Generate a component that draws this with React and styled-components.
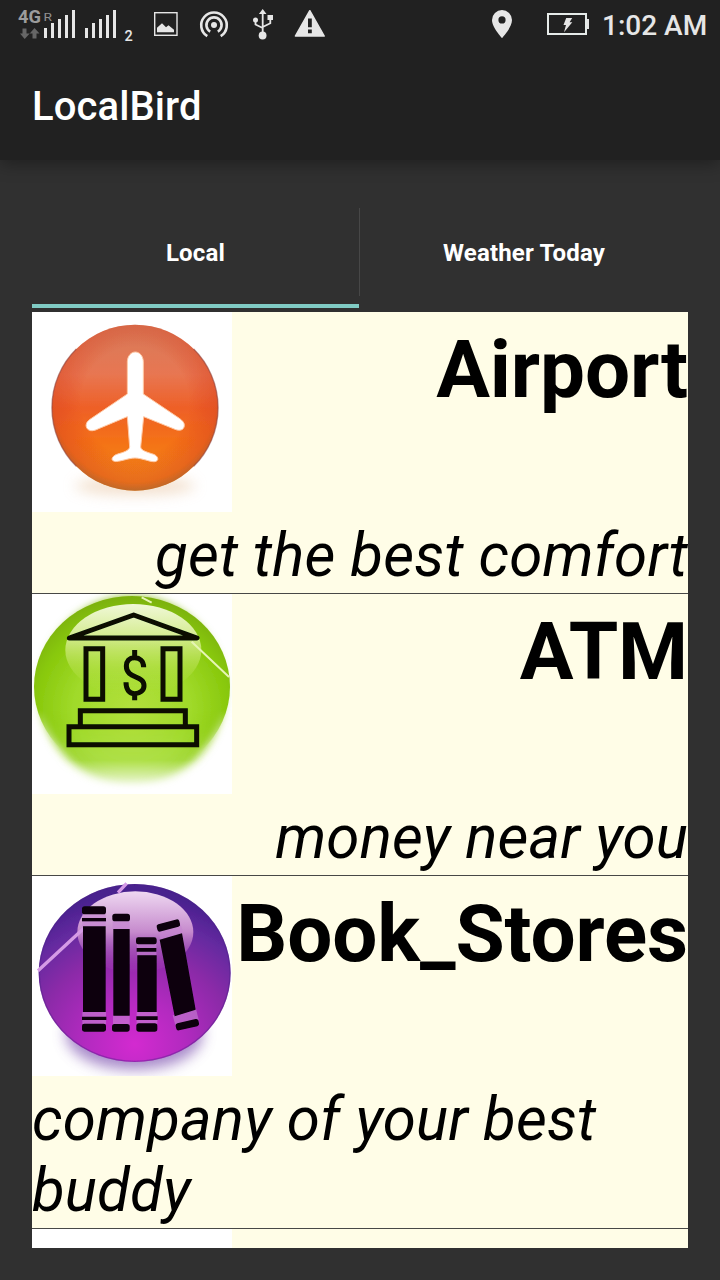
import React from 'react';
import styled, { createGlobalStyle } from 'styled-components';

const GlobalStyle = createGlobalStyle`
  * { box-sizing: border-box; }
  body {
    margin: 0;
    background: #303030;
    font-family: Roboto, "Liberation Sans", sans-serif;
  }
`;

const Screen = styled.div`
  display: flex;
  flex-direction: column;
  width: 720px;
  height: 1280px;
  overflow: hidden;
  background: #303030;
`;

const Header = styled.header`
  flex: none;
  height: 160px;
  background: #212121;
  box-shadow: 0 4px 16px rgba(0, 0, 0, 0.34);
`;

const StatusBar = styled.div`
  display: flex;
  align-items: flex-start;
  height: 50px;
  padding-left: 16px;
  color: #e6e6e6;
`;

const StatusIcon = styled.svg`
  display: block;
  flex: none;
  width: ${(p) => p.$w}px;
  height: 50px;
  margin-left: ${(p) => p.$gap || 0}px;
  overflow: visible;
`;

const Clock = styled.span`
  margin-left: 13px;
  padding-top: 1px;
  font-size: 28px;
  line-height: 50px;
  font-weight: 500;
  white-space: nowrap;
`;

const AppTitle = styled.h1`
  margin: 0;
  padding: 33px 32px 0;
  color: #fff;
  font-size: 40px;
  line-height: 47px;
  font-weight: 500;
  letter-spacing: 0.1px;
`;

const Content = styled.main`
  display: flex;
  flex-direction: column;
  height: 1120px;
  padding: 48px 32px 32px;
`;

const Tabs = styled.nav`
  display: grid;
  flex: none;
  grid-template-columns: 327px 1px 328px;
  height: 100px;
  margin-bottom: 4px;
`;

const Tab = styled.button`
  margin: 0;
  padding: 0 0 ${(p) => (p.$active ? 6 : 10)}px;
  border: 0;
  border-bottom: ${(p) => (p.$active ? '4px solid #80cbc4' : '0')};
  background: none;
  color: #fff;
  font: 700 24px/28px Roboto, "Liberation Sans", sans-serif;
  letter-spacing: 0.18px;
`;

const TabDivider = styled.span`
  height: 88px;
  background: #474747;
`;

const List = styled.ul`
  flex: 1;
  min-height: 0;
  margin: 0;
  padding: 0;
  overflow: hidden;
  background: #fffde7;
  list-style: none;
`;

const Row = styled.li`
  border-bottom: 1px solid #484846;
  color: #000;
`;

const RowTop = styled.div`
  display: flex;
  justify-content: space-between;
  height: 200px;
`;

const Picture = styled.svg`
  flex: none;
  width: 200px;
  height: 200px;
  background: #fff;
`;

const RowTitle = styled.h2`
  margin: 0;
  padding-top: 11px;
  font-size: 80px;
  line-height: 94px;
  font-weight: 700;
  letter-spacing: -0.12px;
  white-space: nowrap;
`;

const RowText = styled.p`
  width: ${(p) => (p.$wraps ? 'auto' : 'max-content')};
  margin: 0 0 0 ${(p) => (p.$wraps ? '0' : 'auto')};
  padding: 8px 0 2px;
  font-size: 60px;
  line-height: 71px;
  font-style: italic;
  letter-spacing: 0.16px;
`;

const Blank = styled.div`
  width: 200px;
  height: 200px;
  background: #fff;
`;

function SignalIcons() {
  return (
    <StatusIcon $w={118} viewBox="16 0 118 50" fill="#e6e6e6">
      <text x="18" y="23" fontSize="17.5" fontWeight="700" fill="#9c9c9c" textLength="23" lengthAdjust="spacingAndGlyphs">4G</text>
      <text x="43.5" y="21" fontSize="10" fill="#909090" textLength="8.5" lengthAdjust="spacingAndGlyphs">R</text>
      <path fill="#666" d="M22.5 28.5h4v5h3.2L24.7 39 20 33.5h2.5zM32.5 38.5h4v-5h3L34.5 28l-4.8 5.500h2.800z" />
      <path d="M44 28h3v10h-3zM51 23h3v15h-3zM58 19h3v19h-3zM65 15h3v23h-3zM72 10h3v28h-3zM85 28h3v10h-3zM92 23h3v15h-3zM99 19h3v19h-3zM106 15h3v23h-3zM113 10h3v28h-3z" />
      <text x="124.500" y="41" fontSize="14.500" fontWeight="500">2</text>
    </StatusIcon>
  );
}

function ImageIcon() {
  return (
    <StatusIcon $w={24} $gap={20} viewBox="154 0 24 50">
      <rect x="154.700" y="12.700" width="22.300" height="22.600" fill="none" stroke="#e6e6e6" strokeWidth="1.400" />
      <path fill="#e6e6e6" d="M157 32.300v-4.500l5-4.500 4 4 2.500-2 5.500 4.500v2.500z" />
    </StatusIcon>
  );
}

function HotspotIcon() {
  return (
    <StatusIcon $w={28} $gap={22} viewBox="200 0 28 50" fill="none" stroke="#e6e6e6" strokeWidth="2.600">
      <circle cx="214" cy="25" r="3" fill="#e6e6e6" stroke="none" />
      <path d="M210.200 31.600a7.600 7.600 0 1 1 7.600 0" />
      <path d="M207.300 36.200a12.800 12.800 0 1 1 13.400 0" />
    </StatusIcon>
  );
}

function UsbIcon() {
  return (
    <StatusIcon $w={20} $gap={25} viewBox="253 0 20 50" fill="#e6e6e6">
      <path d="M262.700 9l3.800 5h-7.600zM267.500 15h5.500v5h-5.500z" />
      <circle cx="255.500" cy="20" r="2.500" />
      <circle cx="262.600" cy="35.500" r="3.900" />
      <path fill="none" stroke="#e6e6e6" strokeWidth="1.800" d="M262.700 13v21M255.500 20v4.500l7.200 3.500M270.300 19v4.300l-7.600 3.700" />
    </StatusIcon>
  );
}

function WarningIcon() {
  return (
    <StatusIcon $w={31} $gap={22} viewBox="295 0 31 50">
      <path fill="#e6e6e6" stroke="#e6e6e6" strokeWidth="1.500" strokeLinejoin="round" d="M309.800 10.700L324.200 36h-28.800z" />
      <path fill="#212121" d="M308 18.500h3.800v8.800H308zM308 29.600h3.800v3.700H308z" />
    </StatusIcon>
  );
}

function LocationIcon() {
  return (
    <StatusIcon $w={20} $gap={166} viewBox="492 0 20 50">
      <path fill="#e6e6e6" fillRule="evenodd" d="M502 10a10 10 0 0 0-10 10c0 7.500 10 18 10 18s10-10.500 10-18a10 10 0 0 0-10-10zm0 6.300a3.600 3.600 0 1 1 0 7.200 3.600 3.600 0 0 1 0-7.200z" />
    </StatusIcon>
  );
}

function BatteryIcon() {
  return (
    <StatusIcon $w={42} $gap={35} viewBox="547 0 42 50">
      <rect x="548" y="14" width="38" height="20" fill="none" stroke="#e6ebe9" strokeWidth="2" />
      <path fill="#e6e6e6" d="M587 19h2v10h-2zM566.200 18h6l-2.600 4.300h2.700l-8.300 10 2-7.200h-2.500z" />
    </StatusIcon>
  );
}

function AirportPicture() {
  return (
    <Picture viewBox="6 6 600 600">
      <defs>
        <linearGradient id="airBase" x1="0" y1="0" x2="0" y2="1">
          <stop offset="0" stopColor="#d67c5c" />
          <stop offset=".3" stopColor="#e87651" />
          <stop offset=".5" stopColor="#ee6027" />
          <stop offset=".7" stopColor="#f47118" />
          <stop offset="1" stopColor="#f39419" />
        </linearGradient>
        <radialGradient id="airEdge" cx=".5" cy=".46" r=".54">
          <stop offset=".6" stopColor="#d93418" stopOpacity="0" />
          <stop offset=".9" stopColor="#d84420" stopOpacity=".45" />
          <stop offset="1" stopColor="#9b4c35" stopOpacity=".6" />
        </radialGradient>
        <filter id="airSoft" x="-20%" y="-120%" width="140%" height="340%"><feGaussianBlur stdDeviation="20" /></filter>
        <filter id="airLine"><feGaussianBlur stdDeviation="2.200" /></filter>
      </defs>
      <ellipse cx="315" cy="528" rx="180" ry="26" fill="#eac9a8" opacity=".6" filter="url(#airSoft)" />
      <g filter="url(#airLine)">
        <circle cx="315" cy="293" r="249" fill="url(#airBase)" />
        <circle cx="315" cy="293" r="249" fill="url(#airEdge)" />
        <path
          fill="none"
          stroke="#8f4038"
          strokeWidth="4"
          opacity=".6"
          d="M139 469A248 248 0 0 1 139 117M491 117A248 248 0 0 1 491 469"
        />
        <path
          fill="#fff"
          stroke="#ffc9a5"
          strokeWidth="3"
          d="M316 126c-13 0-23 12-24 28v98l-112 76c-16 10-16 30 2 34 8 1 16-2 24-6l86-36 7 91c-2 11-19 16-36 21-18 6-22 19-10 22 13 3 43-10 62-10s48 13 60 11c14-3 9-17-4-22-18-6-38-11-39-22l9-91 94 38c14 6 27 2 28-11 1-9-7-16-15-22l-108-73V154c-1-16-11-28-24-28z"
        />
      </g>
    </Picture>
  );
}

function AtmPicture() {
  return (
    <Picture viewBox="6 12 600 600">
      <defs>
        <radialGradient id="atmBase" cx=".5" cy=".62" r=".62">
          <stop offset="0" stopColor="#b2e03c" />
          <stop offset=".48" stopColor="#a0da2a" />
          <stop offset=".8" stopColor="#88c80b" />
          <stop offset="1" stopColor="#7bb008" />
        </radialGradient>
        <linearGradient id="atmShine" x1="0" y1="0" x2="0" y2="1">
          <stop offset="0" stopColor="#f0f8d8" />
          <stop offset=".35" stopColor="#d5ec91" />
          <stop offset=".7" stopColor="#b5e04a" stopOpacity=".6" />
          <stop offset="1" stopColor="#a9dc35" stopOpacity="0" />
        </linearGradient>
        <linearGradient id="atmMaskFill" gradientUnits="userSpaceOnUse" x1="0" y1="400" x2="0" y2="600">
          <stop offset="0" stopColor="#fff" />
          <stop offset=".55" stopColor="#fff" stopOpacity=".88" />
          <stop offset="1" stopColor="#fff" stopOpacity="0" />
        </linearGradient>
        <mask id="atmMask" maskUnits="userSpaceOnUse" x="0" y="0" width="620" height="620">
          <rect width="620" height="620" fill="url(#atmMaskFill)" />
        </mask>
        <linearGradient id="atmEdgeFade" gradientUnits="userSpaceOnUse" x1="0" y1="360" x2="0" y2="480">
          <stop offset="0" stopColor="#fff" />
          <stop offset="1" stopColor="#fff" stopOpacity="0" />
        </linearGradient>
        <mask id="atmEdgeMask" maskUnits="userSpaceOnUse" x="0" y="0" width="620" height="620">
          <rect width="620" height="620" fill="url(#atmEdgeFade)" />
        </mask>
        <filter id="atmSoft" x="-10%" y="-10%" width="120%" height="120%"><feGaussianBlur stdDeviation="13" /></filter>
        <filter id="atmLine"><feGaussianBlur stdDeviation="2.200" /></filter>
      </defs>
      <g mask="url(#atmMask)">
        <ellipse cx="306" cy="304" rx="276" ry="284" fill="url(#atmBase)" filter="url(#atmSoft)" />
      </g>
      <g mask="url(#atmEdgeMask)">
        <ellipse cx="306" cy="290" rx="294" ry="272" fill="url(#atmBase)" filter="url(#atmLine)" />
      </g>
      <ellipse cx="310" cy="180" rx="204" ry="138" fill="url(#atmShine)" filter="url(#atmLine)" />
      <g filter="url(#atmLine)" fill="none">
        <path stroke="#e6f5b5" strokeWidth="6" d="M485 155l112 106M335 22l30 16" />
        <g stroke="#071006" strokeWidth="15">
          <path strokeLinejoin="round" d="M118 144L311 75l190 69z" />
          <path d="M168 176h50v152h-50zM399 176h51v152h-51zM151 410v-48h315v48M117 410h383v54H117z" />
          <path strokeWidth="15" d="M341 232c0-18-12-29-27-29-17 0-25 12-25 25 0 39 53 27 53 59 0 14-12 24-28 24s-26-13-26-34M314 180v24M314 311v20" />
        </g>
      </g>
    </Picture>
  );
}

function BooksPicture() {
  return (
    <Picture viewBox="6 12 600 600">
      <defs>
        <radialGradient id="bookBase" cx=".5" cy=".9" r=".85">
          <stop offset="0" stopColor="#d32bd0" />
          <stop offset=".3" stopColor="#b32ac0" />
          <stop offset=".6" stopColor="#8b2ba8" />
          <stop offset=".82" stopColor="#652aa0" />
          <stop offset="1" stopColor="#48208e" />
        </radialGradient>
        <linearGradient id="bookShine" x1="0" y1="0" x2="0" y2="1">
          <stop offset="0" stopColor="#eed8f1" />
          <stop offset=".5" stopColor="#c68acd" />
          <stop offset="1" stopColor="#a945b5" stopOpacity=".05" />
        </linearGradient>
        <filter id="bookSoft" x="-20%" y="-40%" width="140%" height="180%"><feGaussianBlur stdDeviation="20" /></filter>
        <filter id="bookLine"><feGaussianBlur stdDeviation="2.200" /></filter>
      </defs>
      <ellipse cx="313" cy="486" rx="205" ry="108" fill="#8a64b8" opacity=".75" filter="url(#bookSoft)" />
      <g filter="url(#bookLine)">
        <ellipse cx="314" cy="303" rx="288" ry="267" fill="url(#bookBase)" />
        <ellipse cx="314" cy="303" rx="286" ry="265" fill="none" stroke="#4b2488" strokeWidth="4" opacity=".4" />
        <ellipse cx="316" cy="180" rx="174" ry="122" fill="url(#bookShine)" />
        <path fill="none" stroke="#d59ae6" strokeWidth="10" d="M24 296L160 170M264 62l26-28" />
        <g fill="#c583d0" opacity=".6">
          <path d="M157 124h70v40h-70zM157 420h71v36h-71zM248 148h51v24h-51zM249 430h50v28h-50zM321 216h58v34h-58zM320 420h62v35h-62zM386 178l66-20 8 25-69 20zM428 430l70-20 8 33-70 17z" />
        </g>
        <g fill="#080009">
          <rect x="156" y="103" width="72" height="24" rx="8" />
          <rect x="156" y="138" width="72" height="10" />
          <path d="M159 163h68v257h-68zM156 434h73v10h-73zM250 171h49v260h-49zM320 228h59v11h-59zM322 250h58v170h-58zM319 433h64v11h-64zM389 203l67-19 41 229-63 20z" />
          <rect x="156" y="455" width="72" height="24" rx="7" />
          <rect x="247" y="125" width="53" height="23" rx="8" />
          <rect x="246" y="456" width="53" height="23" rx="8" />
          <rect x="318" y="196" width="62" height="21" rx="7" />
          <rect x="319" y="454" width="63" height="25" rx="8" />
          <rect x="380" y="149" width="70" height="23" rx="7" transform="rotate(-15 415 160)" />
          <rect x="437" y="447" width="70" height="22" rx="7" transform="rotate(-13 472 458)" />
        </g>
      </g>
    </Picture>
  );
}

const places = [
  { title: 'Airport', text: 'get the best comfort', Art: AirportPicture },
  { title: 'ATM', text: 'money near you', Art: AtmPicture },
  { title: 'Book_Stores', text: 'company of your best buddy', Art: BooksPicture, wraps: true },
];

export default function App() {
  return (
    <Screen>
      <GlobalStyle />
      <Header>
        <StatusBar>
          <SignalIcons />
          <ImageIcon />
          <HotspotIcon />
          <UsbIcon />
          <WarningIcon />
          <LocationIcon />
          <BatteryIcon />
          <Clock>1:02 AM</Clock>
        </StatusBar>
        <AppTitle>LocalBird</AppTitle>
      </Header>
      <Content>
        <Tabs>
          <Tab $active>Local</Tab>
          <TabDivider />
          <Tab>Weather Today</Tab>
        </Tabs>
        <List>
          {places.map(({ title, text, Art, wraps }) => (
            <Row key={title}>
              <RowTop>
                <Art />
                <RowTitle>{title}</RowTitle>
              </RowTop>
              <RowText $wraps={wraps}>{text}</RowText>
            </Row>
          ))}
          <li>
            <Blank />
          </li>
        </List>
      </Content>
    </Screen>
  );
}
